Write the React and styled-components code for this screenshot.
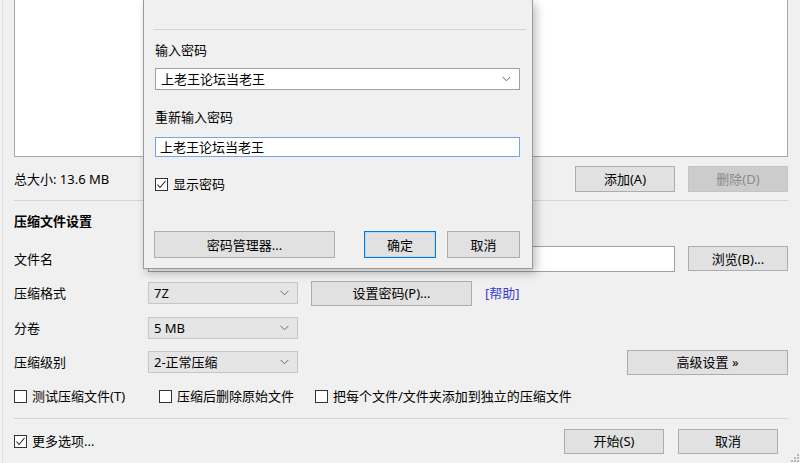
import React from "react";
import styled, { createGlobalStyle } from "styled-components";

const GlobalStyle = createGlobalStyle`
  html, body {
    margin: 0;
    padding: 0;
    background: #f0f0f0;
  }
  body {
    font-family: "Noto Sans", "Noto Sans CJK SC", sans-serif;
    font-size: 13px;
    color: #000;
  }
`;

const Window = styled.div`
  position: relative;
  width: 800px;
  height: 463px;
  overflow: hidden;
  background: #f0f0f0;
  box-shadow: inset 2px 0 0 #f3f3f3, inset 3px 0 0 #dedede;
  padding: 0 12px 0 14px;
  box-sizing: border-box;
  display: flex;
  flex-direction: column;
`;

const ListBox = styled.div`
  height: 157px;
  flex: none;
  box-sizing: border-box;
  background: #fff;
  border: 1px solid #a8a8a8;
  border-top: none;
`;

const Row = styled.div`
  display: flex;
  align-items: center;
  height: ${(p) => p.$h}px;
  flex: none;
  gap: ${(p) => p.$gap || 0}px;
  padding-right: ${(p) => p.$pr || 0}px;
`;

const Text = styled.span`
  line-height: 18px;
  white-space: nowrap;
`;

const Spacer = styled.div`
  flex: 1;
`;

const Separator = styled.div`
  height: 1px;
  flex: none;
  background: #d4d4d4;
  margin: ${(p) => p.$m || "0"};
`;

const Title = styled.div`
  height: 40px;
  flex: none;
  display: flex;
  align-items: center;
  font-weight: 700;
  line-height: 18px;
`;

const Button = styled.div`
  box-sizing: border-box;
  width: ${(p) => p.$w}px;
  height: ${(p) => p.$h || 26}px;
  flex: none;
  display: flex;
  align-items: center;
  justify-content: center;
  background: ${(p) => (p.$disabled ? "#cccccc" : "#e1e1e1")};
  border: 1px solid ${(p) => (p.$default ? "#0078d7" : p.$disabled ? "#c4c4c4" : "#adadad")};
  box-shadow: ${(p) => (p.$default ? "inset 0 0 0 1px #bcd9f3" : "none")};
  color: ${(p) => (p.$disabled ? "#8a8a8a" : "#000")};
  line-height: 18px;
  white-space: nowrap;
  margin-left: ${(p) => p.$ml || "0"};
`;

const FormGrid = styled.div`
  display: grid;
  grid-template-columns: 134px 1fr;
  grid-template-rows: 35px 34px 35px 34px;
  align-items: center;
  flex: none;
`;

const Field = styled.div`
  display: flex;
  align-items: center;
  gap: 13px;
`;

const TextInput = styled.div`
  box-sizing: border-box;
  flex: ${(p) => (p.$w ? "none" : "1")};
  width: ${(p) => (p.$w ? `${p.$w}px` : "auto")};
  height: ${(p) => p.$h || 22}px;
  background: #fff;
  border: 1px solid ${(p) => (p.$focus ? "#6fa8e3" : "#a0a0a0")};
  display: flex;
  align-items: center;
  padding: 0 4px;
  line-height: 18px;
  white-space: nowrap;
`;

const ComboBox = styled.div`
  box-sizing: border-box;
  width: ${(p) => (p.$w ? `${p.$w}px` : "auto")};
  height: 22px;
  flex: none;
  display: flex;
  align-items: center;
  padding: 0 8px 0 5px;
  background: ${(p) => (p.$editable ? "#fff" : "#e5e5e5")};
  border: 1px solid ${(p) => (p.$editable ? "#a0a0a0" : "#c6c6c6")};
  line-height: 18px;
  white-space: nowrap;
`;

const ComboText = styled.span`
  flex: 1;
`;

const Link = styled.span`
  color: #3a3ad8;
  line-height: 18px;
`;

const CheckItem = styled.div`
  display: flex;
  align-items: center;
  gap: 5px;
  width: ${(p) => (p.$w ? `${p.$w}px` : "auto")};
  flex: none;
  white-space: nowrap;
  line-height: 18px;
`;

const Box = styled.div`
  box-sizing: border-box;
  width: 13px;
  height: 13px;
  flex: none;
  border: 1px solid #333;
  background: #fff;
  display: flex;
  align-items: center;
  justify-content: center;
`;

const Dialog = styled.div`
  position: absolute;
  left: 143px;
  top: 0;
  width: 390px;
  box-sizing: border-box;
  background: #f0f0f0;
  border: 1px solid #9a9a9a;
  border-top: none;
  box-shadow: 3px 4px 9px rgba(0, 0, 0, 0.26);
  padding: 29px 12px 10px 11px;
  display: flex;
  flex-direction: column;
`;

const DialogLabel = styled.div`
  height: 20px;
  line-height: 20px;
  margin-top: ${(p) => p.$mt}px;
`;

const Gap = styled.div`
  height: ${(p) => p.$h}px;
  flex: none;
`;

const Grip = styled.svg`
  position: absolute;
  right: 1px;
  bottom: 1px;
`;

const Chevron = () => (
  <svg width="9" height="6" viewBox="0 0 9 6">
    <polyline points="0.5,0.8 4.5,4.8 8.5,0.8" fill="none" stroke="#6b6b6b" strokeWidth="1" />
  </svg>
);

const Check = ({ checked, label, w }) => (
  <CheckItem $w={w}>
    <Box>
      {checked && (
        <svg width="11" height="11" viewBox="0 0 11 11">
          <polyline points="1.5,5.5 4,8.5 9.5,2" fill="none" stroke="#222" strokeWidth="1.1" />
        </svg>
      )}
    </Box>
    {label}
  </CheckItem>
);

export default function App() {
  return (
    <>
      <GlobalStyle />
      <Window>
        <ListBox />
        <Row $h={43} $gap={13}>
          <Text>总大小: 13.6 MB</Text>
          <Spacer />
          <Button $w={100}>添加(A)</Button>
          <Button $w={100} $disabled>
            删除(D)
          </Button>
        </Row>
        <Separator />
        <Title>压缩文件设置</Title>
        <FormGrid>
          <Text>文件名</Text>
          <Field>
            <TextInput $h={26} />
            <Button $w={100} $h={25}>
              浏览(B)...
            </Button>
          </Field>

          <Text>压缩格式</Text>
          <Field>
            <ComboBox $w={150}>
              <ComboText>7Z</ComboText>
              <Chevron />
            </ComboBox>
            <Button $w={161} $h={25}>
              设置密码(P)...
            </Button>
            <Link>[帮助]</Link>
          </Field>

          <Text>分卷</Text>
          <Field>
            <ComboBox $w={150}>
              <ComboText>5 MB</ComboText>
              <Chevron />
            </ComboBox>
          </Field>

          <Text>压缩级别</Text>
          <Field>
            <ComboBox $w={150}>
              <ComboText>2-正常压缩</ComboText>
              <Chevron />
            </ComboBox>
            <Spacer />
            <Button $w={161} $h={25}>
              高级设置 »
            </Button>
          </Field>
        </FormGrid>
        <Row $h={34}>
          <Check label="测试压缩文件(T)" w={145} />
          <Check label="压缩后删除原始文件" w={156} />
          <Check label="把每个文件/文件夹添加到独立的压缩文件" />
        </Row>
        <Separator $m="5px 0 0 0" />
        <Row $h={44} $gap={14} $pr={10}>
          <Check checked label="更多选项..." />
          <Spacer />
          <Button $w={100} $h={25}>
            开始(S)
          </Button>
          <Button $w={100} $h={25}>
            取消
          </Button>
        </Row>

        <Dialog>
          <Separator $m="0 -6px 0 -2px" />
          <DialogLabel $mt={10}>输入密码</DialogLabel>
          <Gap $h={8} />
          <ComboBox $editable>
            <ComboText>上老王论坛当老王</ComboText>
            <Chevron />
          </ComboBox>
          <DialogLabel $mt={17}>重新输入密码</DialogLabel>
          <Gap $h={10} />
          <TextInput $focus>上老王论坛当老王</TextInput>
          <Gap $h={17} />
          <Row $h={20}>
            <Check checked label="显示密码" />
          </Row>
          <Gap $h={37} />
          <Row $h={27}>
            <Button $w={181} $h={27} $ml="-1px">
              密码管理器...
            </Button>
            <Button $w={72} $h={27} $ml="auto" $default>
              确定
            </Button>
            <Button $w={73} $h={27} $ml="11px">
              取消
            </Button>
          </Row>
        </Dialog>

        <Grip width="8" height="8" viewBox="0 0 8 8">
          <g fill="#b5b5b5">
            <rect x="6" y="0" width="2" height="2" />
            <rect x="3" y="3" width="2" height="2" />
            <rect x="6" y="3" width="2" height="2" />
            <rect x="0" y="6" width="2" height="2" />
            <rect x="3" y="6" width="2" height="2" />
            <rect x="6" y="6" width="2" height="2" />
          </g>
        </Grip>
      </Window>
    </>
  );
}
